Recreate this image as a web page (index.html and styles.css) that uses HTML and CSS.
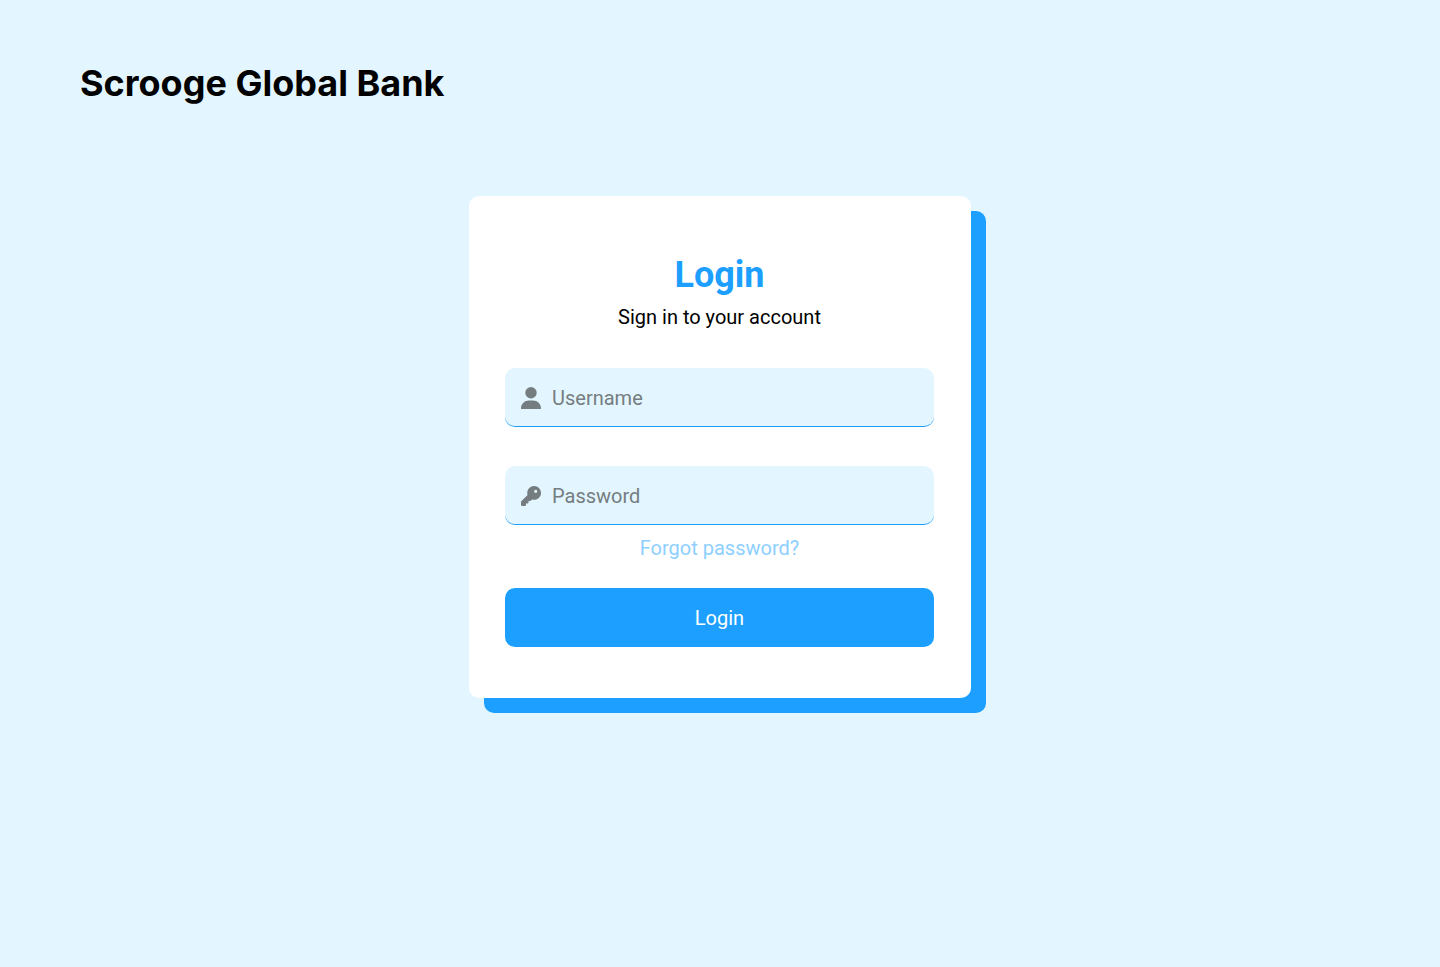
FILE: index.html
```html
<!DOCTYPE html>
<html lang="en">
<head>
  <meta charset="utf-8">
  <meta name="viewport" content="width=device-width, initial-scale=1">
  <title>Scrooge Global Bank</title>
  <link rel="stylesheet" href="styles.css">
</head>
<body>
  <header class="site-header">
    <h1 class="brand">Scrooge Global Bank</h1>
  </header>
  <main class="page">
    <form class="card">
      <h2 class="card-title">Login</h2>
      <p class="card-subtitle">Sign in to your account</p>
      <label class="field">
        <svg class="icon" viewBox="0 0 448 512" aria-hidden="true"><path d="M224 256A128 128 0 1 0 224 0a128 128 0 1 0 0 256zm-45.700 48C79.800 304 0 383.800 0 482.300C0 498.700 13.300 512 29.700 512H418.300c16.400 0 29.700-13.300 29.700-29.700C448 383.800 368.200 304 269.700 304H178.300z"/></svg>
        <input class="input" type="text" placeholder="Username" aria-label="Username">
      </label>
      <label class="field">
        <svg class="icon" viewBox="0 0 512 512" aria-hidden="true"><path d="M336 352c97.200 0 176-78.800 176-176S433.200 0 336 0S160 78.800 160 176c0 18.700 2.900 36.800 8.300 53.700L7 391c-4.500 4.500-7 10.600-7 17v80c0 13.300 10.700 24 24 24h80c13.300 0 24-10.700 24-24V448h40c13.300 0 24-10.700 24-24V384h40c6.400 0 12.500-2.500 17-7l33.300-33.300c16.900 5.400 35 8.300 53.700 8.300zM376 96a40 40 0 1 1 0 80 40 40 0 1 1 0-80z"/></svg>
        <input class="input" type="password" placeholder="Password" aria-label="Password">
      </label>
      <a class="forgot" href="#">Forgot password?</a>
      <button class="submit" type="submit">Login</button>
    </form>
  </main>
</body>
</html>
```
FILE: styles.css
```css
* {
  box-sizing: border-box;
}

body {
  margin: 0;
  min-height: 100vh;
  background: #e3f6ff;
  color: #000;
  font-family: Roboto, "Liberation Sans", sans-serif;
  font-size: 20px;
  line-height: 24px;
}

.site-header {
  padding: 60px 80px 0;
}

.brand {
  margin: 0;
  font-family: Inter, "Liberation Sans", sans-serif;
  font-size: 36px;
  font-weight: 700;
  line-height: 46px;
}

.page {
  display: flex;
  justify-content: center;
  padding: 90px 16px 40px;
}

.card {
  display: flex;
  flex-direction: column;
  width: 100%;
  max-width: 502px;
  padding: 57px 37px 51px 36px;
  border-radius: 10px;
  background: #fff;
  box-shadow: 15px 15px 0 #1c9fff;
  text-align: center;
}

.card-title {
  margin: 0;
  color: #1c9fff;
  font-size: 36px;
  font-weight: 700;
  line-height: 44px;
}

.card-subtitle {
  margin: 8px 0 39px;
}

.field {
  display: flex;
  align-items: center;
  gap: 11px;
  height: 59px;
  padding: 2px 16px 0;
  border-bottom: 1px solid #1c9fff;
  border-radius: 10px;
  background: #e3f6ff;
}

.field + .field {
  margin-top: 39px;
}

.icon {
  flex: none;
  width: 20px;
  fill: #757d81;
}

.input {
  flex: 1;
  min-width: 0;
  padding: 0;
  border: 0;
  outline: 0;
  background: transparent;
  font: inherit;
}

.input::placeholder {
  color: #757d81;
  opacity: 1;
}

.forgot {
  align-self: center;
  margin: 11px 0 28px;
  color: #8dcfff;
  text-decoration: none;
}

.submit {
  height: 59px;
  border: 0;
  border-radius: 10px;
  background: #1c9fff;
  color: #fff;
  font: inherit;
  cursor: pointer;
}
```
